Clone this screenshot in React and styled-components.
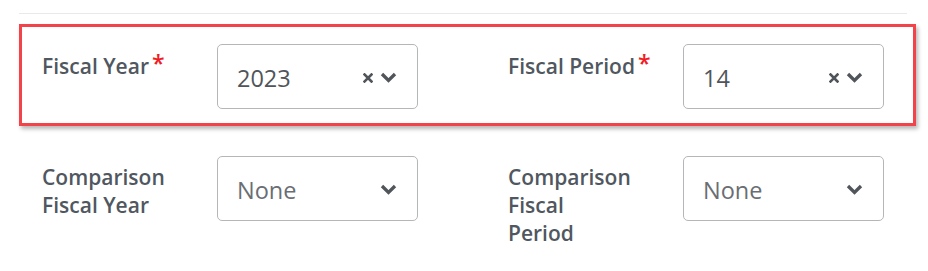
import styled, { createGlobalStyle } from "styled-components";

const GlobalStyle = createGlobalStyle`
  body {
    margin: 0;
    background: #fff;
    font-family: "Open Sans", "Noto Sans", sans-serif;
  }
`;

const Page = styled.div`
  padding: 13px 0 0 19px;
`;

const Divider = styled.div`
  width: 888px;
  height: 1px;
  background: #e8e9ea;
`;

const Highlight = styled.div`
  margin-top: 10px;
  width: 897px;
  box-sizing: border-box;
  border: 3px solid #f2434a;
  box-shadow: 2px 3px 4px rgba(0, 0, 0, 0.28);
  padding: 17px 0 14px 20px;
`;

const Row = styled.div`
  display: flex;
  gap: 90px;
  padding-left: ${(p) => p.$indent || 0}px;
  margin-top: ${(p) => p.$top || 0}px;
`;

const Field = styled.div`
  display: flex;
  align-items: flex-start;
`;

const Label = styled.div`
  width: 175px;
  margin-top: 7px;
  font-size: 21px;
  line-height: 28px;
  font-weight: 600;
  color: #50575f;
`;

const Required = styled.span`
  color: #f01c24;
  font-size: 23px;
  margin-left: 3px;
  position: relative;
  top: -2px;
`;

const Select = styled.div`
  width: 201px;
  height: 65px;
  box-sizing: border-box;
  border: 1px solid #b4b6b8;
  border-radius: 5px;
  background: #fff;
  display: flex;
  align-items: center;
  padding: 2px 20px 0 19px;
`;

const Value = styled.span`
  flex: 1;
  font-size: 23.5px;
  color: ${(p) => (p.$placeholder ? "#6a6e73" : "#50555b")};
`;

const Icons = styled.div`
  display: flex;
  align-items: center;
  gap: 7px;
  color: #50555b;
`;

const Clear = () => (
  <svg width="10" height="10" viewBox="0 0 10 10">
    <path d="M1.5 1.5 L8.5 8.5 M8.5 1.5 L1.5 8.5" stroke="currentColor" strokeWidth="2.6" strokeLinecap="square" />
  </svg>
);

const Chevron = () => (
  <svg width="17" height="11" viewBox="0 0 17 11">
    <polyline points="2,2 8.5,8.5 15,2" fill="none" stroke="currentColor" strokeWidth="3.3" />
  </svg>
);

const Dropdown = ({ value, placeholder, clearable }) => (
  <Select>
    <Value $placeholder={placeholder}>{value}</Value>
    <Icons>
      {clearable && <Clear />}
      <Chevron />
    </Icons>
  </Select>
);

const App = () => {
  return (
    <Page>
      <GlobalStyle />
      <Divider />
      <Highlight>
        <Row>
          <Field>
            <Label>
              Fiscal Year<Required>*</Required>
            </Label>
            <Dropdown value="2023" clearable />
          </Field>
          <Field>
            <Label>
              Fiscal Period<Required>*</Required>
            </Label>
            <Dropdown value="14" clearable />
          </Field>
        </Row>
      </Highlight>
      <Row $indent={23} $top={30}>
        <Field>
          <Label>
            Comparison
            <br />
            Fiscal Year
          </Label>
          <Dropdown value="None" placeholder />
        </Field>
        <Field>
          <Label>
            Comparison
            <br />
            Fiscal
            <br />
            Period
          </Label>
          <Dropdown value="None" placeholder />
        </Field>
      </Row>
    </Page>
  );
};

export default App;
